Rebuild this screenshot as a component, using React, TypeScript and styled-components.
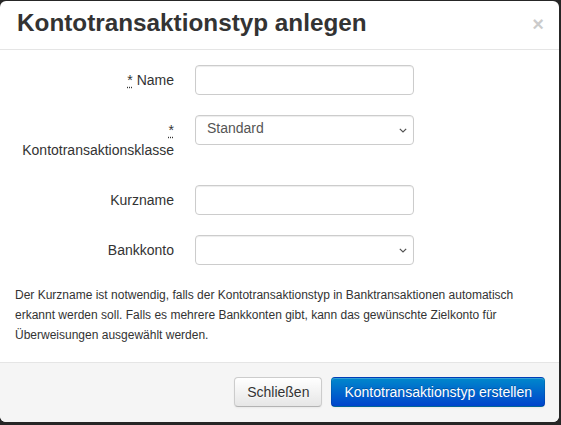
import React from 'react'
import styled, { createGlobalStyle } from 'styled-components'

const GlobalStyle = createGlobalStyle`
  html, body {
    margin: 0;
    padding: 0;
    background: #262626;
    font-family: "Liberation Sans", Arial, sans-serif;
    color: #333;
  }
`

const Backdrop = styled.div`
  width: 561px;
  height: 425px;
  padding: 1px 2px 3px 0;
  box-sizing: border-box;
`

const Modal = styled.div`
  height: 100%;
  background: #fff;
  border-radius: 6px;
  overflow: hidden;
  display: flex;
  flex-direction: column;
`

const Header = styled.div`
  display: flex;
  align-items: center;
  justify-content: space-between;
  padding: 8px 15px 12px 17px;
  border-bottom: 1px solid #e5e5e5;
`

const Title = styled.h3`
  margin: 0;
  font-size: 24.3px;
  line-height: 28px;
  font-weight: bold;
  color: #333;
`

const Close = styled.button`
  border: 0;
  background: none;
  padding: 0;
  margin-top: 2px;
  font-family: "Liberation Sans", Arial, sans-serif;
  font-size: 20px;
  font-weight: bold;
  line-height: 20px;
  color: #000;
  opacity: 0.2;
  text-shadow: 0 1px 0 #fff;
  cursor: pointer;
`

const Body = styled.div`
  padding: 15px 15px 17px 15px;
`

const FormRow = styled.div`
  display: grid;
  grid-template-columns: 159px 219px;
  column-gap: 21px;
  align-items: start;
  margin-bottom: 20px;
`

const Label = styled.label`
  padding: 5px 0;
  text-align: right;
  font-size: 14px;
  line-height: 20px;
  color: #333;
`

const Required = styled.abbr`
  text-decoration: underline dotted;
  text-underline-offset: 2px;
  cursor: help;
`

const Input = styled.input`
  box-sizing: border-box;
  width: 100%;
  height: 30px;
  padding: 4px 12px;
  border: 1px solid #ccc;
  border-radius: 4px;
  box-shadow: inset 0 1px 1px rgba(0, 0, 0, 0.075);
  font-family: "Liberation Sans", Arial, sans-serif;
  font-size: 14px;
  color: #555;
  outline: none;
`

const SelectWrap = styled.div`
  position: relative;
`

const Select = styled.select`
  box-sizing: border-box;
  width: 100%;
  height: 30px;
  padding: 0 24px 4px 11px;
  border: 1px solid #ccc;
  border-radius: 4px;
  background: #fff;
  box-shadow: inset 0 1px 1px rgba(0, 0, 0, 0.075);
  appearance: none;
  font-family: "Liberation Sans", Arial, sans-serif;
  font-size: 14px;
  color: #555;
  outline: none;
`

const Chevron = styled.svg`
  position: absolute;
  right: 7px;
  top: 13px;
  pointer-events: none;
`

const Help = styled.p`
  margin: 0;
  font-size: 12px;
  line-height: 20px;
  color: #333;
`

const Footer = styled.div`
  flex: 1;
  display: flex;
  justify-content: flex-end;
  align-items: flex-start;
  gap: 9px;
  padding: 14px 14px 0;
  background: #f5f5f5;
  border-top: 1px solid #e5e5e5;
`

const Button = styled.button<{ $primary?: boolean }>`
  height: 30px;
  padding: 5px 12px;
  border-radius: 4px;
  font-family: "Liberation Sans", Arial, sans-serif;
  font-size: 14px;
  line-height: 18px;
  cursor: pointer;
  border: 1px solid;
  box-shadow: inset 0 1px 0 rgba(255, 255, 255, 0.2), 0 1px 2px rgba(0, 0, 0, 0.05);
  color: ${p => (p.$primary ? '#fff' : '#333')};
  text-shadow: ${p => (p.$primary ? '0 -1px 0 rgba(0,0,0,0.25)' : '0 1px 1px rgba(255,255,255,0.75)')};
  background: ${p => (p.$primary
    ? 'linear-gradient(to bottom, #0088cc, #0044cc)'
    : 'linear-gradient(to bottom, #ffffff, #e6e6e6)')};
  border-color: ${p => (p.$primary
    ? 'rgba(0,0,0,0.1) rgba(0,0,0,0.1) rgba(0,0,0,0.25)'
    : '#cccccc #cccccc #b3b3b3')};
`

const SelectField = ({ value }: { value?: string }) => (
  <SelectWrap>
    <Select defaultValue={value || ''}>
      {value ? <option value={value}>{value}</option> : <option value="" />}
    </Select>
    <Chevron width="8" height="5" viewBox="0 0 8 5">
      <path d="M0.8 0.8 L4 4 L7.2 0.8" fill="none" stroke="#555" strokeWidth="1.2" />
    </Chevron>
  </SelectWrap>
)

const App = () => {
  return (
    <>
      <GlobalStyle />
      <Backdrop>
        <Modal>
          <Header>
            <Title>Kontotransaktionstyp anlegen</Title>
            <Close>×</Close>
          </Header>
          <Body>
            <FormRow>
              <Label><Required title="Pflichtfeld">*</Required> Name</Label>
              <Input type="text" />
            </FormRow>
            <FormRow>
              <Label><Required title="Pflichtfeld">*</Required> Kontotransaktionsklasse</Label>
              <SelectField value="Standard" />
            </FormRow>
            <FormRow>
              <Label>Kurzname</Label>
              <Input type="text" />
            </FormRow>
            <FormRow>
              <Label>Bankkonto</Label>
              <SelectField />
            </FormRow>
            <Help>
              Der Kurzname ist notwendig, falls der Kontotransaktionstyp in Banktransaktionen automatisch
              erkannt werden soll. Falls es mehrere Bankkonten gibt, kann das gewünschte Zielkonto für
              Überweisungen ausgewählt werden.
            </Help>
          </Body>
          <Footer>
            <Button>Schließen</Button>
            <Button $primary>Kontotransaktionstyp erstellen</Button>
          </Footer>
        </Modal>
      </Backdrop>
    </>
  )
}

export default App
